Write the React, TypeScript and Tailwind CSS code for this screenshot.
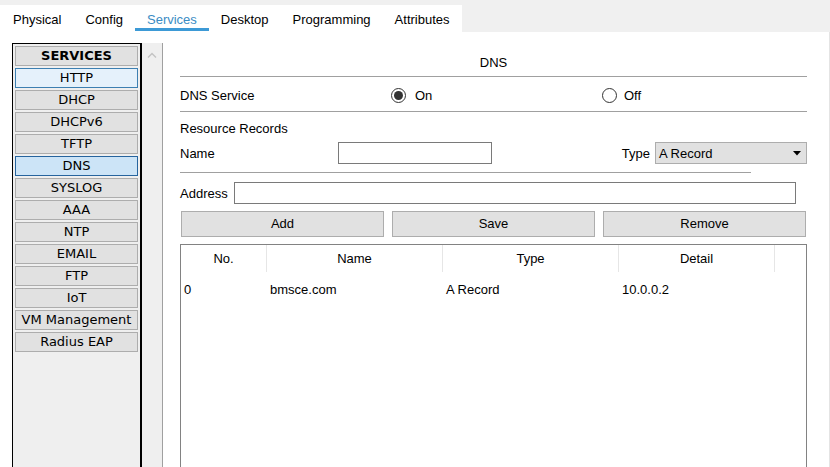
import React from 'react';

const tabs = ['Physical', 'Config', 'Services', 'Desktop', 'Programming', 'Attributes'];

const services = [
  'HTTP',
  'DHCP',
  'DHCPv6',
  'TFTP',
  'DNS',
  'SYSLOG',
  'AAA',
  'NTP',
  'EMAIL',
  'FTP',
  'IoT',
  'VM Management',
  'Radius EAP',
];

function Radio({ checked }: { checked: boolean }) {
  return (
    <span className="flex h-[15px] w-[15px] items-center justify-center rounded-full border border-[#333] bg-white">
      {checked && <span className="h-[9px] w-[9px] rounded-full bg-[#333]" />}
    </span>
  );
}

function ActionButton({ label }: { label: string }) {
  return (
    <button className="flex h-[26px] w-[203px] items-center justify-center border border-[#adadad] bg-[#e1e1e1] text-[13px] text-black">
      {label}
    </button>
  );
}

export default function App() {
  return (
    <div className="flex h-[467px] w-[830px] flex-col overflow-hidden bg-white font-['Liberation_Sans',Arial,sans-serif] text-[13px] text-black">
      {/* Tab bar */}
      <div className="h-[5px] shrink-0 bg-[#f0f0f0]" />
      <div className="flex h-[27px] shrink-0">
        <div className="flex bg-white pl-px">
          {tabs.map((t) => (
            <div
              key={t}
              className={
                t === 'Services'
                  ? 'mb-px flex h-[26px] items-center border-b-[3px] border-[#3d9ad6] px-3 pt-[6px] text-[#3a8cc4]'
                  : 'mb-px flex h-[26px] items-center border-b-[3px] border-transparent px-3 pt-[6px]'
              }
            >
              {t}
            </div>
          ))}
        </div>
        <div className="flex-1 bg-[#f0f0f0]" />
      </div>

      {/* Body */}
      <div className="flex min-h-0 flex-1 overflow-hidden border-r border-[#e4e4e4]">
        {/* Services list */}
        <div className="flex pl-3 pt-[11px]">
          <div className="flex w-[130px] flex-col gap-[2px] border-t border-l border-r-2 border-black bg-[#efefef] px-[2px] pt-[2px] font-['DejaVu_Sans',Verdana,sans-serif]">
            <div className="flex h-[20px] shrink-0 items-center justify-center border border-[#adadad] bg-[#e1e1e1] text-[13px] font-bold">
              SERVICES
            </div>
            {services.map((s) => (
              <div
                key={s}
                className={
                  s === 'HTTP'
                    ? 'flex h-[20px] shrink-0 items-center justify-center border border-[#3c7fb1] bg-[#e5f1fb] text-[13px]'
                    : s === 'DNS'
                      ? 'flex h-[20px] shrink-0 items-center justify-center border border-[#26649e] bg-[#cce4f7] text-[13px]'
                      : 'flex h-[20px] shrink-0 items-center justify-center border border-[#adadad] bg-[#e1e1e1] text-[13px]'
                }
              >
                {s}
              </div>
            ))}
          </div>
          <div className="flex w-[21px] justify-center border-r border-[#a0a0a0] bg-[#efefef] pt-[9px]">
            <svg width="10" height="6" viewBox="0 0 10 6">
              <path d="M1 5.5 L5 1.5 L9 5.5" fill="none" stroke="#c4c4c4" strokeWidth="1.5" />
            </svg>
          </div>
        </div>

        {/* DNS panel */}
        <div className="ml-[17px] flex w-[627px] flex-col">
          <div className="mt-[23px] h-[16px] shrink-0 text-center leading-[16px]">DNS</div>
          <div className="mt-[5px] h-px shrink-0 bg-[#a0a0a0]" />

          <div className="flex h-[34px] shrink-0 items-center pt-[3px]">
            <div className="w-[211px]">DNS Service</div>
            <div className="flex w-[211px] items-center gap-[9px]">
              <Radio checked />
              <span>On</span>
            </div>
            <div className="flex items-center gap-[7px]">
              <Radio checked={false} />
              <span>Off</span>
            </div>
          </div>
          <div className="h-px shrink-0 bg-[#a0a0a0]" />

          <div className="mt-[9px] h-[16px] shrink-0 leading-[16px]">Resource Records</div>

          <div className="mt-[5px] flex h-[22px] shrink-0 items-center">
            <div className="w-[158px] pt-px">Name</div>
            <div className="h-[22px] w-[154px] border border-[#7a7a7a] bg-white" />
            <div className="flex-1" />
            <div className="mr-[5px] pt-px">Type</div>
            <div className="flex h-[22px] w-[152px] items-center justify-between border border-[#adadad] bg-[#e1e1e1] pl-[3px] pr-[5px]">
              <span className="pt-px">A Record</span>
              <svg width="8" height="5" viewBox="0 0 8 5">
                <path d="M0 0 H8 L4 4.5 Z" fill="#000" />
              </svg>
            </div>
          </div>

          <div className="mt-[8px] h-px w-[571px] shrink-0 bg-[#a0a0a0]" />

          <div className="mt-[9px] flex h-[22px] shrink-0 items-center">
            <div className="w-[54px] pt-px">Address</div>
            <div className="h-[22px] w-[562px] border border-[#7a7a7a] bg-white" />
          </div>

          <div className="mt-[7px] flex shrink-0 gap-[8px] pl-px">
            <ActionButton label="Add" />
            <ActionButton label="Save" />
            <ActionButton label="Remove" />
          </div>

          {/* Records table */}
          <div className="mt-[7px] h-[260px] shrink-0 border border-[#828282] bg-white">
            <div className="flex h-[27px]">
              <div className="flex w-[86px] items-center justify-center border-r border-[#e6e6e6]">No.</div>
              <div className="flex w-[176px] items-center justify-center border-r border-[#e6e6e6]">Name</div>
              <div className="flex w-[176px] items-center justify-center border-r border-[#e6e6e6]">Type</div>
              <div className="flex w-[156px] items-center justify-center border-r border-[#e6e6e6]">Detail</div>
              <div className="flex-1" />
            </div>
            <div className="flex h-[36px] items-center">
              <div className="w-[86px] pl-[3px]">0</div>
              <div className="w-[176px] pl-[3px]">bmsce.com</div>
              <div className="w-[176px] pl-[3px]">A Record</div>
              <div className="w-[156px] pl-[3px]">10.0.0.2</div>
            </div>
          </div>
        </div>
      </div>
    </div>
  );
}
